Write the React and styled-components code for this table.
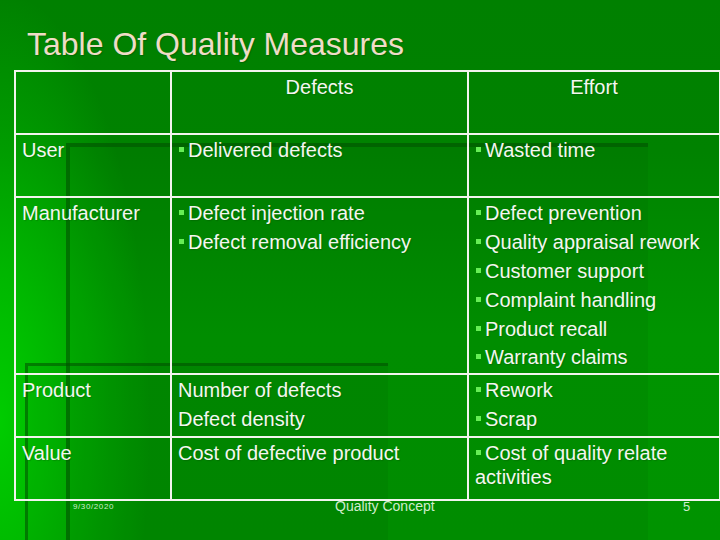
import React from 'react';
import styled, { createGlobalStyle } from 'styled-components';

const lineColor = '#f2f4ee';
const textColor = '#f4f6f0';

const GlobalStyle = createGlobalStyle`
  html, body {
    margin: 0;
    padding: 0;
  }
  body {
    font-family: "Liberation Sans", Arial, sans-serif;
  }
`;

const Slide = styled.div`
  position: relative;
  width: 720px;
  height: 540px;
  overflow: hidden;
  display: flex;
  flex-direction: column;
  background:
    radial-gradient(ellipse 150px 430px at 0% 78%, rgba(0, 214, 0, 0.85), rgba(0, 214, 0, 0) 100%),
    linear-gradient(to bottom, #008000 0%, #008200 28%, #009400 62%, #009300 100%);
`;

// slide template ornaments: dark-edged panels behind the content
const Panel = styled.div`
  position: absolute;
  left: ${(p) => p.left}px;
  top: ${(p) => p.top}px;
  width: ${(p) => p.width}px;
  bottom: 0;
  border-left: ${(p) => p.edge}px solid rgba(0, 80, 0, 0.55);
  border-top: ${(p) => p.edge}px solid rgba(0, 80, 0, 0.55);
  background: rgba(0, 40, 0, 0.06);
  pointer-events: none;
`;

const Title = styled.h1`
  position: relative;
  margin: 0;
  padding: 28px 0 0 27px;
  height: 32px;
  font-size: 32px;
  line-height: 32px;
  font-weight: normal;
  color: #efdcc6;
  text-shadow: 1px 1px 1px rgba(0, 50, 0, 0.3);
`;

const Table = styled.table`
  position: relative;
  margin: 10px 0 0 14px;
  width: 705px;
  border-collapse: collapse;
  table-layout: fixed;
  font-size: 20px;
  line-height: 24px;
  color: ${textColor};
  text-shadow: 1px 1px 1px rgba(0, 40, 0, 0.2);
`;

const Row = styled.tr`
  height: 63px;
`;

const Cell = styled.td`
  border: 2px solid ${lineColor};
  padding: 1px 6px 1px;
  vertical-align: top;
  text-align: ${(p) => (p.center ? 'center' : 'left')};
`;

const Line = styled.div`
  padding: 2.4px 0;
  white-space: ${(p) => (p.wrap ? 'normal' : 'nowrap')};
`;

const Bullet = styled.span`
  display: inline-block;
  width: 5px;
  height: 5px;
  margin: 0 4px 0 1px;
  vertical-align: 5px;
  background: #66ee55;
`;

const Footer = styled.div`
  position: relative;
  display: flex;
  align-items: flex-start;
  height: 20px;
  color: #cfeccc;
`;

const FootDate = styled.span`
  margin: 1px 0 0 73px;
  width: 262px;
  font-size: 8px;
  letter-spacing: 0.6px;
`;

const FootTitle = styled.span`
  margin-top: -3px;
  width: 348px;
  font-size: 14px;
`;

const FootPage = styled.span`
  margin-top: -2px;
  font-size: 13px;
`;

const Item = ({ children, bullet = true, wrap }) => (
  <Line wrap={wrap}>
    {bullet && <Bullet />}
    {children}
  </Line>
);

export default function App() {
  return (
    <>
      <GlobalStyle />
      <Slide>
        <Panel left={66} top={143} width={578} edge={4} />
        <Panel left={25} top={363} width={360} edge={3} />
        <Title>Table Of Quality Measures</Title>
        <Table>
          <colgroup>
            <col style={{ width: 156 }} />
            <col style={{ width: 297 }} />
            <col style={{ width: 252 }} />
          </colgroup>
          <tbody>
            <Row>
              <Cell />
              <Cell center>
                <Line>Defects</Line>
              </Cell>
              <Cell center>
                <Line>Effort</Line>
              </Cell>
            </Row>
            <Row>
              <Cell>
                <Line>User</Line>
              </Cell>
              <Cell>
                <Item>Delivered defects</Item>
              </Cell>
              <Cell>
                <Item>Wasted time</Item>
              </Cell>
            </Row>
            <Row>
              <Cell>
                <Line>Manufacturer</Line>
              </Cell>
              <Cell>
                <Item>Defect injection rate</Item>
                <Item>Defect removal efficiency</Item>
              </Cell>
              <Cell>
                <Item>Defect prevention</Item>
                <Item>Quality appraisal rework</Item>
                <Item>Customer support</Item>
                <Item>Complaint handling</Item>
                <Item>Product recall</Item>
                <Item>Warranty claims</Item>
              </Cell>
            </Row>
            <Row>
              <Cell>
                <Line>Product</Line>
              </Cell>
              <Cell>
                <Item bullet={false}>Number of defects</Item>
                <Item bullet={false}>Defect density</Item>
              </Cell>
              <Cell>
                <Item>Rework</Item>
                <Item>Scrap</Item>
              </Cell>
            </Row>
            <Row>
              <Cell>
                <Line>Value</Line>
              </Cell>
              <Cell>
                <Item bullet={false}>Cost of defective product</Item>
              </Cell>
              <Cell>
                <Item wrap>Cost of quality relate activities</Item>
              </Cell>
            </Row>
          </tbody>
        </Table>
        <Footer>
          <FootDate>9/30/2020</FootDate>
          <FootTitle>Quality Concept</FootTitle>
          <FootPage>5</FootPage>
        </Footer>
      </Slide>
    </>
  );
}
